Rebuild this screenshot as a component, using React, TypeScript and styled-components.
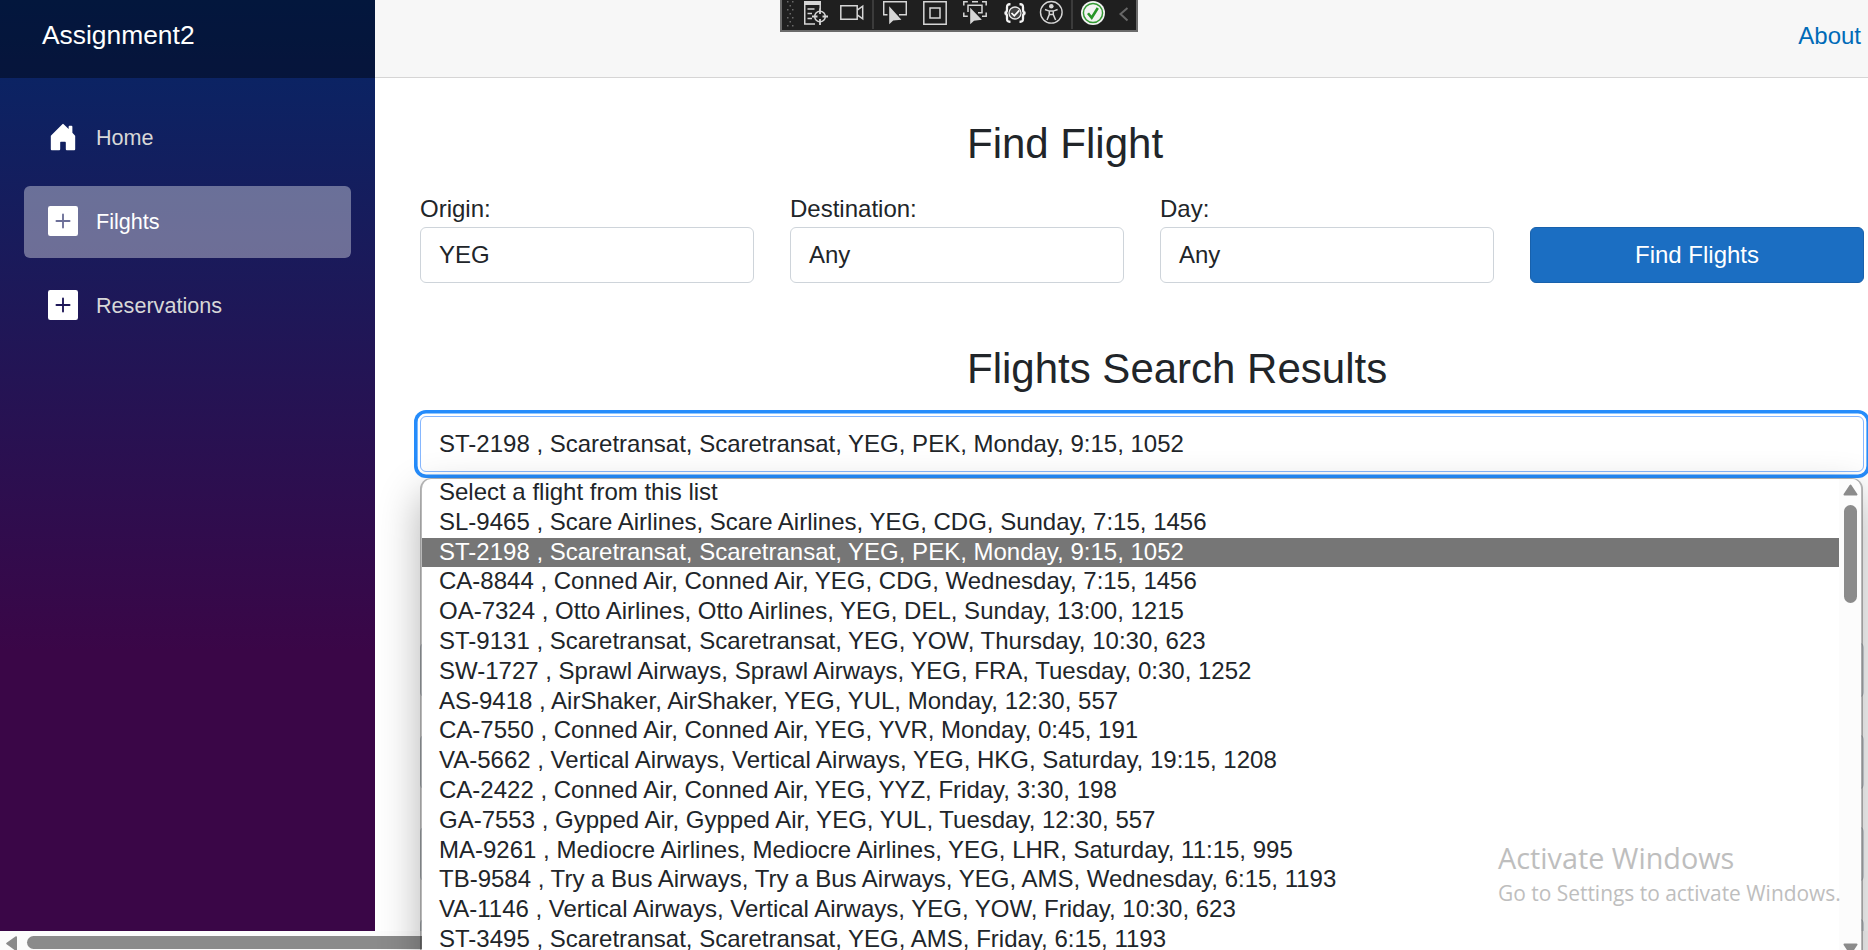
import React from "react";
import styled, { createGlobalStyle } from "styled-components";

const GlobalStyle = createGlobalStyle`
  * { box-sizing: border-box; }
  body {
    margin: 0;
    overflow: hidden;
    background: #fff;
    color: #212529;
    font: 24px/36px "Liberation Sans", Arial, sans-serif;
  }
`;

const Screen = styled.div`
  position: relative;
  display: flex;
  flex-direction: column;
  width: 1868px;
  height: 950px;
  overflow: hidden;
`;
const Page = styled.div`
  display: flex;
  height: 931px;
`;
const Sidebar = styled.aside`
  flex: none;
  width: 375px;
  background: linear-gradient(180deg, rgb(5, 39, 103) 0%, #3a0647 70%);
`;
const Brand = styled.div`
  height: 78px;
  padding: 17px 0 0 42px;
  background: rgba(0, 0, 0, 0.4);
  color: #fff;
  font-size: 26.4px;
`;
const Nav = styled.nav`
  display: flex;
  flex-direction: column;
  gap: 12px;
  padding: 24px;
`;
const NavItem = styled.a<{ $active?: boolean }>`
  display: flex;
  align-items: center;
  gap: 18px;
  height: 72px;
  padding: 0 24px 2px;
  border-radius: 6px;
  font-size: 21.6px;
  color: ${(p) => (p.$active ? "#fff" : "#d7d7d7")};
  background: ${(p) => (p.$active ? "rgba(255,255,255,0.37)" : "transparent")};
  svg { display: block; }
`;
const NavLabel = styled.span`
  padding-top: 1px;
`;
const Main = styled.main`
  flex: 1;
  min-width: 0;
`;
const TopRow = styled.header`
  display: flex;
  justify-content: flex-end;
  height: 78px;
  padding: 18px 7px 0 0;
  background: #f7f7f7;
  border-bottom: 1px solid #d6d5d5;
`;
const AboutLink = styled.a`
  color: #006bb7;
`;
const Content = styled.article`
  width: 1489px;
  padding: 41px 0 0 45px;
`;
const Heading = styled.h3<{ $top?: number }>`
  margin: ${(p) => p.$top ?? 0}px 0 0;
  padding-left: 547px;
  font-size: 42px;
  font-weight: 400;
  line-height: 49px;
`;
const SearchRow = styled.div`
  display: grid;
  grid-template-columns: repeat(4, 334px);
  gap: 36px;
  align-items: end;
  margin-top: 23px;
`;
const Field = styled.label`
  display: flex;
  flex-direction: column;
  gap: 1px;
  line-height: 35px;
`;
const Control = styled.div`
  height: 56px;
  padding: 9px 18px;
  border: 1px solid #ced4da;
  border-radius: 6px;
  background: #fff;
  line-height: 35px;
`;
const Button = styled.button`
  height: 56px;
  padding: 0 0 1px;
  border: 1px solid #1861ac;
  border-radius: 6px;
  background: #1b6ec2;
  color: #fff;
  font: inherit;
  line-height: 35px;
`;
const SelectWrap = styled.div`
  position: relative;
  margin-top: 23px;
`;
const FocusedSelect = styled(Control)`
  border-color: #86b7fe;
  box-shadow: 0 0 0 2.4px #fff, 0 0 0 6px #258cfb;
`;
const Details = styled.div`
  display: grid;
  gap: 36px;
  margin-top: 170px;
`;
const DetailBox = styled.div`
  height: 56px;
  border: 1px solid #ced4da;
  border-radius: 6px;
  background: #e9ecef;
`;
const Popup = styled.div`
  position: absolute;
  left: 0;
  top: 62px;
  display: flex;
  width: 1443px;
  height: 560px;
  border: 2px solid rgba(0, 0, 0, 0.28);
  border-top-width: 1px;
  border-radius: 11px;
  background: #fff;
  background-clip: padding-box;
  box-shadow: 0 16px 42px rgba(0, 0, 0, 0.3);
  overflow: hidden;
`;
const OptionList = styled.ul`
  flex: 1;
  margin: -1px 0 0;
  padding: 0;
  list-style: none;
`;
const Option = styled.li<{ $selected?: boolean }>`
  height: 29.8px;
  padding-left: 17px;
  line-height: 28px;
  white-space: pre;
  color: ${(p) => (p.$selected ? "#fff" : "#212529")};
  background: ${(p) => (p.$selected ? "#767676" : "transparent")};
`;
const VScroll = styled.div`
  display: flex;
  flex-direction: column;
  align-items: center;
  width: 22px;
  height: 471px;
  padding: 5px 0 0 1px;
  background: #fcfcfc;
  svg { display: block; flex: none; }
`;
const VThumb = styled.div`
  width: 13px;
  height: 98px;
  margin: 9px 0 340px;
  border-radius: 7px;
  background: #8b8b8b;
  flex: none;
`;
const HScroll = styled.div`
  display: flex;
  height: 19px;
  padding: 5px 0 0 6px;
  background: #fcfcfc;
  svg { display: block; flex: none; }
`;
const HThumb = styled.div`
  width: 1500px;
  height: 13px;
  margin-left: 10px;
  border-radius: 7px;
  background: #8b8b8b;
`;
const Watermark = styled.div`
  position: absolute;
  left: 1498px;
  top: 839px;
  color: #bebebe;
  font-family: "Open Sans", sans-serif;
  white-space: nowrap;
`;
const WatermarkTitle = styled.div`
  font-size: 28.8px;
  line-height: 38px;
  margin-bottom: 1px;
`;
const WatermarkText = styled.div`
  font-size: 20.93px;
  line-height: 30px;
`;
const DebugBar = styled.div`
  position: absolute;
  left: 780px;
  top: 0;
  display: flex;
  width: 358px;
  height: 32px;
  padding: 0 0 0 4px;
  border: 2px solid #6b6b6b;
  border-top: 0;
  background: #1f1f1f;
  svg { display: block; flex: none; }
`;
const Tool = styled.span<{ $gap: number }>`
  flex: none;
  width: 24px;
  height: 26px;
  margin-left: ${(p) => p.$gap}px;
`;
const Separator = styled.span<{ $gap: number }>`
  flex: none;
  width: 2px;
  height: 29px;
  margin-left: ${(p) => p.$gap}px;
  background: #3b3b3b;
`;

const HomeIcon = () => (
  <svg width="30" height="30" viewBox="0 0 16 16" fill="#fff">
    <path d="M6.5 14.5v-3.505c0-.245.25-.495.5-.495h2c.25 0 .5.25.5.5v3.5a.5.5 0 0 0 .5.5h4a.5.5 0 0 0 .5-.5v-7a.5.5 0 0 0-.146-.354L13 5.793V2.5a.5.5 0 0 0-.5-.5h-1a.5.5 0 0 0-.5.5v1.293L8.354 1.146a.5.5 0 0 0-.708 0l-6 6A.5.5 0 0 0 1.5 7.5v7a.5.5 0 0 0 .5.5h4a.5.5 0 0 0 .5-.5Z" />
  </svg>
);
const PlusIcon = () => (
  <svg width="30" height="30" viewBox="0 0 16 16" fill="#fff">
    <path d="M1.2 0A1.2 1.2 0 0 0 0 1.2v13.6A1.2 1.2 0 0 0 1.2 16h13.6a1.2 1.2 0 0 0 1.2-1.2V1.2A1.2 1.2 0 0 0 14.8 0H1.2zm7.3 4.5v3h3a.5.5 0 0 1 0 1h-3v3a.5.5 0 0 1-1 0v-3h-3a.5.5 0 0 1 0-1h3v-3a.5.5 0 0 1 1 0z" />
  </svg>
);

const Ico = ({ children }: { children: React.ReactNode }) => (
  <svg width="24" height="26" viewBox="0 0 24 26" fill="none" stroke="#d6d6d6" strokeWidth="1.5">
    {children}
  </svg>
);

const dots: [number, number][] = [];
for (let r = 0; r < 7; r++) {
  const y = 1 + r * 4;
  if (r % 2 === 0) dots.push([1.5, y], [6.5, y]);
  else dots.push([4, y]);
}

const DebugToolbar = () => (
  <DebugBar>
    <svg width="10" height="28" viewBox="0 0 10 28" fill="#6a6a6a">
      {dots.map(([x, y]) => (
        <rect key={`${x}-${y}`} x={x - 0.5} y={y} width="1.5" height="1.5" />
      ))}
    </svg>
    <Tool $gap={8}>
      <Ico>
        <path d="M0 1h17v4H0z" fill="#d6d6d6" stroke="none" />
        <path d="M.75 4v20H11M16.2 5v4M3.5 9h7M3.5 13.5H8M3.5 18.5H8" />
        <circle cx="16" cy="16.5" r="5.3" />
        <path d="M16 8.5v5.5M16 19v6M8 16.5h5.5M18.5 16.5H24" strokeWidth="1.8" />
      </Ico>
    </Tool>
    <Tool $gap={12}>
      <Ico>
        <path d="M.8 5.7h16.4v13.6H.8zM17.2 10.2l5.5-4v12.6l-5.5-4" />
      </Ico>
    </Tool>
    <Separator $gap={8} />
    <Tool $gap={9}>
      <Ico>
        <path d="M4.5 14.8H.7V1.7h22.6v13.1H16" />
        <path d="M6.2 6.3v18l4-3.8 8.2-.8z" fill="#d6d6d6" stroke="none" />
      </Ico>
    </Tool>
    <Tool $gap={16}>
      <Ico>
        <path d="M.8 1.8h22.4v22.4H.8zM7 8h10v10H7z" />
      </Ico>
    </Tool>
    <Tool $gap={16}>
      <Ico>
        <path d="M.8 5.5V1.8h4M9 1.8h6M19 1.8h4.2v3.7M.8 12.5v3.7h4M23.2 12.5v3.7H19" />
        <path d="M5 12V5.2h14v7.5h-4" />
        <path d="M7.2 7.8v16.5l3.800-3.600 7.800-.9z" fill="#d6d6d6" stroke="none" />
      </Ico>
    </Tool>
    <Tool $gap={16}>
      <Ico>
        <circle cx="12" cy="13" r="6" fill="#444" stroke="#e8e8e8" strokeWidth="1.3" />
        <path d="M8.500 13l2.800 2.800 5-5.400" stroke="#fff" strokeWidth="1.700" />
        <path
          d="M7.500 4.300C4.500 4 4 5.300 4 7.500v2.200c0 1.800-.8 3-2.400 3.300 1.600.3 2.400 1.500 2.400 3.300v2.200c0 2.200.5 3.500 3.500 3.200M16.500 4.300c3-.3 3.500 1 3.500 3.200v2.200c0 1.800.8 3 2.400 3.300-1.600.3-2.400 1.500-2.400 3.300v2.200c0 2.200-.5 3.500-3.500 3.200"
          stroke="#f2f2f2"
          strokeWidth="2.300"
        />
      </Ico>
    </Tool>
    <Tool $gap={12}>
      <Ico>
        <circle cx="12.300" cy="12.300" r="10.800" strokeWidth="1.400" />
        <circle cx="12.300" cy="6.300" r="2.300" fill="#d6d6d6" stroke="none" />
        <path d="M6 9.500l4.300 1.600h4l4.300-1.600M10.300 11v3.500L8 20M14.300 11v3.500l2.300 5.500M10.500 14.500h3.600" />
      </Ico>
    </Tool>
    <Separator $gap={8} />
    <Tool $gap={8}>
      <Ico>
        <circle cx="12" cy="13" r="12" fill="#f3f3f3" stroke="none" />
        <circle cx="12" cy="13" r="9.600" stroke="#339a33" />
        <path d="M7 13.200l3.700 4.600L16.800 8" stroke="#289428" strokeWidth="2.600" />
      </Ico>
    </Tool>
    <Tool $gap={12}>
      <Ico>
        <path d="M10.500 8L3.500 14l7 6.500" stroke="#686868" strokeWidth="2" />
      </Ico>
    </Tool>
  </DebugBar>
);

const options = [
  "Select a flight from this list",
  "SL-9465 , Scare Airlines, Scare Airlines, YEG, CDG, Sunday, 7:15, 1456",
  "ST-2198 , Scaretransat, Scaretransat, YEG, PEK, Monday, 9:15, 1052",
  "CA-8844 , Conned Air, Conned Air, YEG, CDG, Wednesday, 7:15, 1456",
  "OA-7324 , Otto Airlines, Otto Airlines, YEG, DEL, Sunday, 13:00, 1215",
  "ST-9131 , Scaretransat, Scaretransat, YEG, YOW, Thursday, 10:30, 623",
  "SW-1727 , Sprawl Airways, Sprawl Airways, YEG, FRA, Tuesday, 0:30, 1252",
  "AS-9418 , AirShaker, AirShaker, YEG, YUL, Monday, 12:30, 557",
  "CA-7550 , Conned Air, Conned Air, YEG, YVR, Monday, 0:45, 191",
  "VA-5662 , Vertical Airways, Vertical Airways, YEG, HKG, Saturday, 19:15, 1208",
  "CA-2422 , Conned Air, Conned Air, YEG, YYZ, Friday, 3:30, 198",
  "GA-7553 , Gypped Air, Gypped Air, YEG, YUL, Tuesday, 12:30, 557",
  "MA-9261 , Mediocre Airlines, Mediocre Airlines, YEG, LHR, Saturday, 11:15, 995",
  "TB-9584 , Try a Bus Airways, Try a Bus Airways, YEG, AMS, Wednesday, 6:15, 1193",
  "VA-1146 , Vertical Airways, Vertical Airways, YEG, YOW, Friday, 10:30, 623",
  "ST-3495 , Scaretransat, Scaretransat, YEG, AMS, Friday, 6:15, 1193",
];
const selectedIndex = 2;

export default function App() {
  return (
    <Screen>
      <GlobalStyle />
      <Page>
        <Sidebar>
          <Brand>Assignment2</Brand>
          <Nav>
            <NavItem><HomeIcon /><NavLabel>Home</NavLabel></NavItem>
            <NavItem $active><PlusIcon /><NavLabel>Filghts</NavLabel></NavItem>
            <NavItem><PlusIcon /><NavLabel>Reservations</NavLabel></NavItem>
          </Nav>
        </Sidebar>
        <Main>
          <TopRow>
            <AboutLink>About</AboutLink>
          </TopRow>
          <Content>
            <Heading>Find Flight</Heading>
            <SearchRow>
              <Field>Origin:<Control>YEG</Control></Field>
              <Field>Destination:<Control>Any</Control></Field>
              <Field>Day:<Control>Any</Control></Field>
              <Button>Find Flights</Button>
            </SearchRow>
            <Heading $top={61}>Flights Search Results</Heading>
            <SelectWrap>
              <FocusedSelect>{options[selectedIndex]}</FocusedSelect>
              <Popup>
                <OptionList>
                  {options.map((text, i) => (
                    <Option key={text} $selected={i === selectedIndex}>{text}</Option>
                  ))}
                </OptionList>
                <VScroll>
                  <svg width="15" height="12" viewBox="0 0 15 12">
                    <path d="M7.500 1.500L13.500 10.500H1.500z" fill="#8b8b8b" stroke="#8b8b8b" strokeWidth="2" strokeLinejoin="round" />
                  </svg>
                  <VThumb />
                  <svg width="15" height="12" viewBox="0 0 15 12">
                    <path d="M7.500 10.500L13.500 1.500H1.500z" fill="#8b8b8b" stroke="#8b8b8b" strokeWidth="2" strokeLinejoin="round" />
                  </svg>
                </VScroll>
              </Popup>
            </SelectWrap>
            <Details>
              <DetailBox />
              <DetailBox />
              <DetailBox />
              <DetailBox />
            </Details>
          </Content>
        </Main>
      </Page>
      <HScroll>
        <svg width="11" height="15" viewBox="0 0 11 15">
          <path d="M1.200 7.500L10 1.200V13.800z" fill="#8b8b8b" stroke="#8b8b8b" strokeWidth="2" strokeLinejoin="round" />
        </svg>
        <HThumb />
      </HScroll>
      <Watermark>
        <WatermarkTitle>Activate Windows</WatermarkTitle>
        <WatermarkText>Go to Settings to activate Windows.</WatermarkText>
      </Watermark>
      <DebugToolbar />
    </Screen>
  );
}
